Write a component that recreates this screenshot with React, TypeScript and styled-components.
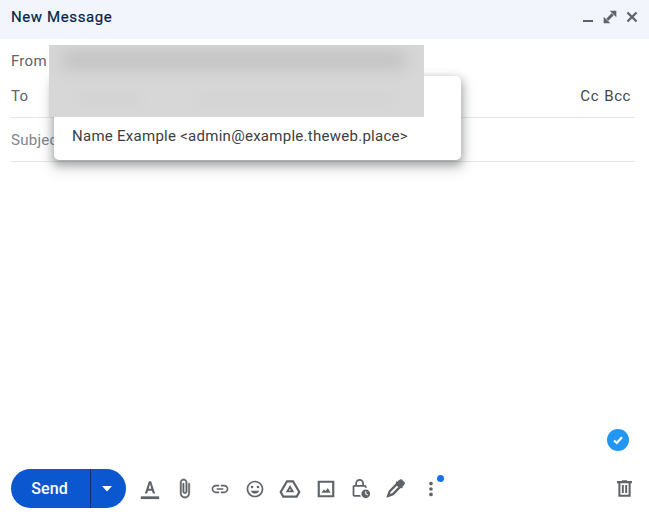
import React from "react";
import styled, { createGlobalStyle } from "styled-components";

const Global = createGlobalStyle`
  html, body { margin: 0; padding: 0; background: #fff; overflow: hidden; }
  #root { height: 100vh; }
`;

const Page = styled.div`
  position: relative;
  height: 517px;
  display: flex;
  flex-direction: column;
  font-family: Roboto, "Liberation Sans", sans-serif;
  font-size: 15px;
  letter-spacing: 0.27px;
  color: #3c4043;
  overflow: hidden;
`;

const Header = styled.header`
  flex: 0 0 39px;
  display: flex;
  align-items: center;
  justify-content: space-between;
  padding: 0 11px 5px;
  box-sizing: border-box;
  height: 39px;
  background: #f2f6fc;
`;

const Title = styled.div`
  font-size: 15px;
  font-weight: 400;
  letter-spacing: 0.6px;
  color: #041e49;
  -webkit-text-stroke: 0.2px #041e49;
`;

const WindowControls = styled.div`
  display: flex;
  align-items: center;
  gap: 6px;
  margin-right: -1.5px;
  color: #5f6368;
`;

const Fields = styled.div`
  padding: 0 14px 0 11px;
`;

const FromRow = styled.div`
  height: 40px;
  padding-top: 4px;
  box-sizing: border-box;
  display: flex;
  align-items: center;
  color: #5f6368;
`;

const ToRow = styled.div`
  height: 39px;
  padding-bottom: 5px;
  box-sizing: border-box;
  display: flex;
  align-items: center;
  justify-content: space-between;
  border-bottom: 1px solid #e6e6e6;
  color: #5f6368;
`;

const Recipients = styled.div`
  color: #444746;
  margin-right: 4px;
  word-spacing: 1px;
  letter-spacing: 0.55px;
`;

const SubjectRow = styled.div`
  height: 44px;
  box-sizing: border-box;
  display: flex;
  align-items: center;
  border-bottom: 1px solid #e6e6e6;
  color: #80868b;
`;

const Body = styled.div`
  flex: 1;
  display: flex;
  justify-content: flex-end;
  align-items: flex-end;
  padding: 0 20px 18px 0;
`;

const Verified = styled.div`
  width: 22px;
  height: 22px;
  border-radius: 50%;
  background: #2196f3;
  display: flex;
  align-items: center;
  justify-content: center;
`;

const Footer = styled.footer`
  flex: 0 0 39px;
  display: flex;
  align-items: center;
  padding: 0 7px 9px 11px;
`;

const SendGroup = styled.div`
  display: flex;
  height: 39px;
  width: 115px;
  border-radius: 20px;
  background: #0b57d0;
  color: #fff;
  overflow: hidden;
  margin-right: 6px;
`;

const SendLabel = styled.div`
  width: 80px;
  flex: none;
  display: flex;
  align-items: center;
  justify-content: center;
  padding-right: 2px;
  box-sizing: border-box;
  font-size: 16px;
  font-weight: 500;
  letter-spacing: 0.1px;
  border-right: 1px solid #06306f;
`;

const SendCaret = styled.div`
  flex: 1;
  display: flex;
  align-items: center;
  justify-content: center;
  padding-right: 3px;
`;

const Tool = styled.div`
  position: relative;
  width: 35.2px;
  height: 36px;
  flex: none;
  display: flex;
  align-items: center;
  justify-content: center;
  color: #5f6368;
`;

const Spacer = styled.div`
  flex: 1;
`;

const Dot = styled.span`
  position: absolute;
  left: 23px;
  top: 4px;
  width: 7px;
  height: 7px;
  border-radius: 50%;
  background: #1a73e8;
`;

const Popup = styled.div`
  position: absolute;
  left: 54px;
  top: 76px;
  width: 407px;
  height: 84px;
  border-radius: 5px;
  background: #fff;
  box-shadow: 0 4px 8px 1px rgba(60, 64, 67, 0.4), 0 6px 14px 4px rgba(60, 64, 67, 0.14);
  box-sizing: border-box;
  padding: 50px 0 0 18px;
  color: #3c4043;
  line-height: 20px;
`;

const Redaction = styled.div`
  position: absolute;
  left: 49px;
  top: 45px;
  width: 375px;
  height: 72px;
  background: #d7d7d7;
  overflow: hidden;
`;

const Smear = styled.div<{ $x: number; $y: number; $w: number; $h: number; $tone: string; $blur: number }>`
  position: absolute;
  left: ${(p) => p.$x}px;
  top: ${(p) => p.$y}px;
  width: ${(p) => p.$w}px;
  height: ${(p) => p.$h}px;
  background: ${(p) => p.$tone};
  filter: blur(${(p) => p.$blur}px);
`;

const Icon = ({ size = 20, children }: { size?: number; children: React.ReactNode }) => (
  <svg width={size} height={size} viewBox="0 0 24 24" fill="currentColor">
    {children}
  </svg>
);

export default function App() {
  return (
    <Page>
      <Global />
      <Header>
        <Title>New Message</Title>
        <WindowControls>
          <Icon size={16}>
            <path d="M4.5 16.5h15v3h-15z" />
          </Icon>
          <Icon size={16}>
            <path d="M11.5 2.5h10v10zM12.5 21.5h-10v-10z" />
            <path d="M8 16 16 8" stroke="currentColor" strokeWidth="4.4" />
          </Icon>
          <Icon size={16}>
            <path d="M4 6.4 6.4 4 12 9.6 17.6 4 20 6.4 14.4 12l5.6 5.6-2.4 2.4-5.6-5.6L6.4 20 4 17.6 9.6 12z" />
          </Icon>
        </WindowControls>
      </Header>
      <Fields>
        <FromRow>From</FromRow>
        <ToRow>
          <span>To</span>
          <Recipients>Cc Bcc</Recipients>
        </ToRow>
        <SubjectRow>Subject</SubjectRow>
      </Fields>
      <Body>
        <Verified>
          <svg width="12" height="12" viewBox="0 0 24 24" fill="none" stroke="#fff" strokeWidth="4.5">
            <path d="M4 13l5.5 5L20 6.5" />
          </svg>
        </Verified>
      </Body>
      <Footer>
        <SendGroup>
          <SendLabel>Send</SendLabel>
          <SendCaret>
            <svg width="10" height="6" viewBox="0 0 10 6" fill="#fff">
              <path d="M0 0h10L5 5.5z" />
            </svg>
          </SendCaret>
        </SendGroup>
        <Tool>
          <Icon size={22}>
            <path d="M2 20h20v3H2z" />
            <path d="M6.4 17h2.4l1.1-3.2h4.2l1.1 3.2h2.4L13.2 3.5h-2.4L6.4 17zm4.2-5.2L12 6.6l1.4 5.2h-2.8z" />
          </Icon>
        </Tool>
        <Tool>
          <Icon size={21}>
            <path
              stroke="currentColor"
              strokeWidth="0.6"
              d="M16.5 6v11.5c0 2.21-1.79 4-4 4s-4-1.79-4-4V5c0-1.38 1.12-2.5 2.5-2.5s2.5 1.12 2.5 2.5v10.5c0 .55-.45 1-1 1s-1-.45-1-1V6H10v9.5c0 1.38 1.12 2.5 2.5 2.5s2.5-1.12 2.5-2.5V5c0-2.21-1.79-4-4-4S7 2.79 7 5v12.5c0 3.04 2.46 5.5 5.5 5.5s5.5-2.46 5.5-5.5V6h-1.5z"
            />
          </Icon>
        </Tool>
        <Tool>
          <Icon>
            <path d="M3.9 12c0-1.71 1.39-3.1 3.1-3.1h4V7H7c-2.76 0-5 2.24-5 5s2.24 5 5 5h4v-1.9H7c-1.71 0-3.1-1.39-3.1-3.1zM8 13h8v-2H8v2zm9-6h-4v1.9h4c1.71 0 3.1 1.39 3.1 3.1s-1.39 3.1-3.1 3.1h-4V17h4c2.76 0 5-2.24 5-5s-2.24-5-5-5z" />
          </Icon>
        </Tool>
        <Tool>
          <Icon>
            <path d="M11.99 2C6.47 2 2 6.48 2 12s4.47 10 9.99 10C17.52 22 22 17.52 22 12S17.52 2 11.99 2zM12 20c-4.42 0-8-3.58-8-8s3.58-8 8-8 8 3.58 8 8-3.58 8-8 8z" />
            <circle cx="15.5" cy="9.5" r="1.5" />
            <circle cx="8.5" cy="9.5" r="1.5" />
            <path d="M12 17.5c2.33 0 4.31-1.46 5.11-3.5H6.89c.8 2.04 2.78 3.5 5.11 3.5z" />
          </Icon>
        </Tool>
        <Tool>
          <Icon size={22}>
            <path
              fillRule="evenodd"
              d="M8 2.5h8L23.5 15.2 20 21.5H4L.5 15.2 8 2.5zm1.3 2.3L3.2 15.2 5.4 19h13.2l2.2-3.8L14.7 4.8H9.3zM12 7.6l4.6 7.9H7.4L12 7.6zm0 4-1.1 1.9h2.2L12 11.6z"
            />
          </Icon>
        </Tool>
        <Tool>
          <Icon>
            <path fillRule="evenodd" d="M2 2h20v20H2V2zm2.6 2.6v14.8h14.8V4.6H4.6z" />
            <path d="M14.2 10.8 11.5 14.4 9.6 12.2 6.5 16.6h11z" />
          </Icon>
        </Tool>
        <Tool>
          <Icon size={21}>
            <path d="M17 8h-1V6c0-2.76-2.24-5-5-5S6 3.24 6 6v2H5c-1.1 0-2 .9-2 2v9.5c0 1.1.9 2 2 2h7.6a7 7 0 0 1-.9-2H5V10h12v1.2c.7 0 1.4.1 2 .3V10c0-1.1-.9-2-2-2zM8 8V6c0-1.66 1.34-3 3-3s3 1.34 3 3v2H8z" />
            <path
              fillRule="evenodd"
              d="M18 13a5 5 0 1 0 0 10 5 5 0 0 0 0-10zm-.6 2h1.2v2.8l2 1.2-.6 1-2.6-1.6V15z"
            />
          </Icon>
        </Tool>
        <Tool>
          <Icon size={21}>
            <path d="M15.5 2.5 18.5 1 23 5.5 21.5 8.5 19.8 9.6l.8.8-1.6 1.6-.8-.8-8.4 8.4L6 21l-4.5 1.5L3 18l1.4-3.8 8.4-8.4-.8-.8 1.6-1.6.8.8 1.1-1.7zM13.6 8.8l-7 7-.8 2.4 2.4-.8 7-7-1.6-1.6z" />
            <path d="M13.8 6.4 17.6 10.2 21 7 17 3z" />
          </Icon>
        </Tool>
        <Tool>
          <Icon>
            <circle cx="12" cy="5.5" r="2.2" />
            <circle cx="12" cy="12" r="2.2" />
            <circle cx="12" cy="18.5" r="2.2" />
          </Icon>
          <Dot />
        </Tool>
        <Spacer />
        <Tool>
          <Icon size={21}>
            <path d="M15 3.5V2.5H9v1H3.5V6H5v15.5h14V6h1.5V3.5H15zM16.7 19.2H7.3V6h9.4v13.2z" />
            <path d="M9 8h2.2v9H9zM12.8 8H15v9h-2.2z" />
          </Icon>
        </Tool>
      </Footer>
      <Popup>Name Example &lt;admin@example.theweb.place&gt;</Popup>
      <Redaction>
        <Smear $x={14} $y={11} $w={342} $h={8} $tone="#a8a8a8" $blur={9} />
        <Smear $x={30} $y={52} $w={60} $h={3} $tone="#cbcbcb" $blur={5} />
        <Smear $x={148} $y={52} $w={195} $h={3} $tone="#cdcdcd" $blur={5} />
      </Redaction>
    </Page>
  );
}
